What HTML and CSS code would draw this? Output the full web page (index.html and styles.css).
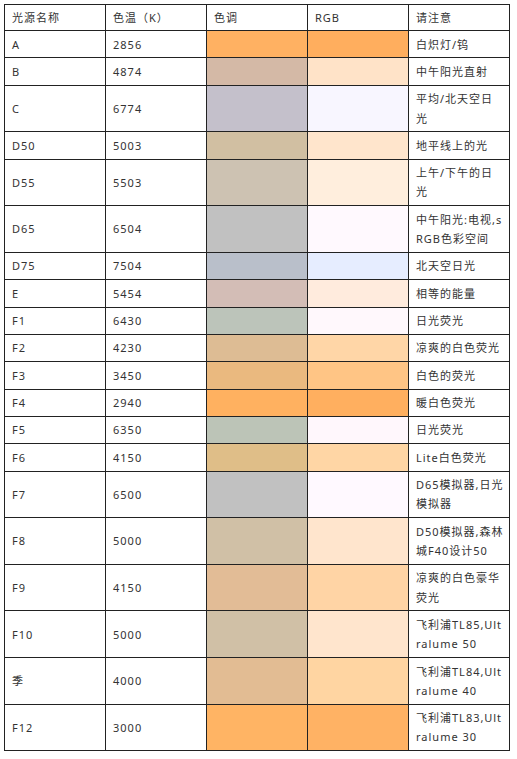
FILE: index.html
```html
<!DOCTYPE html>
<html lang="zh-CN">
<head>
<meta charset="utf-8">
<title>标准光源</title>
<link rel="stylesheet" href="styles.css">
</head>
<body>
<div class="wrap">
<table class="light-table">
  <colgroup><col><col><col><col><col></colgroup>
  <thead>
    <tr><th>光源名称</th><th>色温（K）</th><th>色调</th><th>RGB</th><th>请注意</th></tr>
  </thead>
  <tbody>
    <tr><td>A</td><td>2856</td><td class="sw" style="background:#FFB162"></td><td class="sw" style="background:#FFAE5E"></td><td>白炽灯/钨</td></tr>
    <tr><td>B</td><td>4874</td><td class="sw" style="background:#D4B9A6"></td><td class="sw" style="background:#FFE3C8"></td><td>中午阳光直射</td></tr>
    <tr><td>C</td><td>6774</td><td class="sw" style="background:#C4C0CB"></td><td class="sw" style="background:#F8F6FF"></td><td>平均/北天空日光</td></tr>
    <tr><td>D50</td><td>5003</td><td class="sw" style="background:#D1BFA2"></td><td class="sw" style="background:#FFE5CC"></td><td>地平线上的光</td></tr>
    <tr><td>D55</td><td>5503</td><td class="sw" style="background:#CDC2B2"></td><td class="sw" style="background:#FFEEDD"></td><td>上午/下午的日光</td></tr>
    <tr><td>D65</td><td>6504</td><td class="sw" style="background:#C1C1C1"></td><td class="sw" style="background:#FFF9FE"></td><td>中午阳光:电视,sRGB色彩空间</td></tr>
    <tr><td>D75</td><td>7504</td><td class="sw" style="background:#B9BFCA"></td><td class="sw" style="background:#E6EDFF"></td><td>北天空日光</td></tr>
    <tr><td>E</td><td>5454</td><td class="sw" style="background:#D3BDB6"></td><td class="sw" style="background:#FFEBDD"></td><td>相等的能量</td></tr>
    <tr><td>F1</td><td>6430</td><td class="sw" style="background:#BCC4BA"></td><td class="sw" style="background:#FFF8FC"></td><td>日光荧光</td></tr>
    <tr><td>F2</td><td>4230</td><td class="sw" style="background:#DDBC94"></td><td class="sw" style="background:#FFD6A7"></td><td>凉爽的白色荧光</td></tr>
    <tr><td>F3</td><td>3450</td><td class="sw" style="background:#EAB97F"></td><td class="sw" style="background:#FFC585"></td><td>白色的荧光</td></tr>
    <tr><td>F4</td><td>2940</td><td class="sw" style="background:#FFB160"></td><td class="sw" style="background:#FFAF5F"></td><td>暖白色荧光</td></tr>
    <tr><td>F5</td><td>6350</td><td class="sw" style="background:#BCC4B7"></td><td class="sw" style="background:#FFF7FC"></td><td>日光荧光</td></tr>
    <tr><td>F6</td><td>4150</td><td class="sw" style="background:#DFBE88"></td><td class="sw" style="background:#FFD6A5"></td><td>Lite白色荧光</td></tr>
    <tr><td>F7</td><td>6500</td><td class="sw" style="background:#C1C1C1"></td><td class="sw" style="background:#FFF9FF"></td><td>D65模拟器,日光模拟器</td></tr>
    <tr><td>F8</td><td>5000</td><td class="sw" style="background:#D0C0A6"></td><td class="sw" style="background:#FFE5CD"></td><td>D50模拟器,森林城F40设计50</td></tr>
    <tr><td>F9</td><td>4150</td><td class="sw" style="background:#E2BC96"></td><td class="sw" style="background:#FFD4A5"></td><td>凉爽的白色豪华荧光</td></tr>
    <tr><td>F10</td><td>5000</td><td class="sw" style="background:#D0C0A6"></td><td class="sw" style="background:#FFE5CD"></td><td>飞利浦TL85,Ultralume 50</td></tr>
    <tr><td>季</td><td>4000</td><td class="sw" style="background:#E2BC93"></td><td class="sw" style="background:#FFD5A2"></td><td>飞利浦TL84,Ultralume 40</td></tr>
    <tr><td>F12</td><td>3000</td><td class="sw" style="background:#FFB464"></td><td class="sw" style="background:#FFB264"></td><td>飞利浦TL83,Ultralume 30</td></tr>
  </tbody>
</table>
</div>
</body>
</html>
```

FILE: styles.css
```css
html, body {
  margin: 0;
  padding: 0;
  background: #ffffff;
}

.wrap {
  padding: 4px 0 0 4px;
}

.light-table {
  width: 506px;
  table-layout: fixed;
  border-collapse: collapse;
  font-family: "Noto Sans", "Noto Sans CJK SC", sans-serif;
  font-size: 11px;
  letter-spacing: 1px;
  line-height: 19.25px;
  color: #333333;
}

.light-table col {
  width: 20%;
}

.light-table th,
.light-table td {
  border: 1px solid #222222;
  padding: 3.55px 5px 3.55px 7px;
  text-align: left;
  vertical-align: middle;
  font-weight: normal;
  word-break: break-all;
}

.light-table th {
  padding-top: 2.9px;
  padding-bottom: 2.9px;
}
```
